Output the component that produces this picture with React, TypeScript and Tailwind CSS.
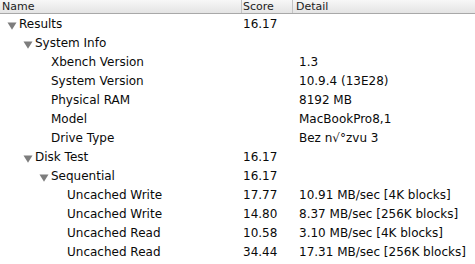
import React from "react";

type Row = { level: number; label: string; score?: string; detail?: string; open?: boolean };

const rows: Row[] = [
  { level: 0, label: "Results", score: "16.17", open: true },
  { level: 1, label: "System Info", open: true },
  { level: 2, label: "Xbench Version", detail: "1.3" },
  { level: 2, label: "System Version", detail: "10.9.4 (13E28)" },
  { level: 2, label: "Physical RAM", detail: "8192 MB" },
  { level: 2, label: "Model", detail: "MacBookPro8,1" },
  { level: 2, label: "Drive Type", detail: "Bez n\u221A\u00B0zvu 3" },
  { level: 1, label: "Disk Test", score: "16.17", open: true },
  { level: 2, label: "Sequential", score: "16.17", open: true },
  { level: 3, label: "Uncached Write", score: "17.77", detail: "10.91 MB/sec [4K blocks]" },
  { level: 3, label: "Uncached Write", score: "14.80", detail: "8.37 MB/sec [256K blocks]" },
  { level: 3, label: "Uncached Read", score: "10.58", detail: "3.10 MB/sec [4K blocks]" },
  { level: 3, label: "Uncached Read", score: "34.44", detail: "17.31 MB/sec [256K blocks]" },
];

const indent = ["pl-[19px]", "pl-[35px]", "pl-[51px]", "pl-[67px]"];

function Disclosure() {
  return (
    <svg width="10" height="8" viewBox="0 0 10 8" className="absolute left-[-12px] top-[5px]">
      <path d="M0.5 0.5 H9.5 L5 7.8 Z" fill="#7d7d7d" />
    </svg>
  );
}

export default function App() {
  return (
    <div
      className="w-[475px] h-[264px] bg-white overflow-hidden text-[#0a0a0a]"
      style={{ fontFamily: '"DejaVu Sans", "Liberation Sans", sans-serif' }}
    >
      <div className="flex h-[14px] text-[11px] leading-[13px] text-[#222] bg-gradient-to-b from-[#f7f7f7] to-[#e4e4e4] border-b border-[#a8a8a8]">
        <div className="w-[242px] pl-[2px] border-r border-[#c4c4c4]">Name</div>
        <div className="w-[51px] pl-[1px] border-r border-[#c4c4c4]">Score</div>
        <div className="flex-1 pl-[3px]">Detail</div>
      </div>
      {rows.map((r, i) => (
        <div key={i} className="flex h-[19px] pt-[2px] text-[12px] leading-[17px]">
          <div className={`w-[242px] ${indent[r.level]}`}>
            <span className="relative">
              {r.open && <Disclosure />}
              {r.label}
            </span>
          </div>
          <div className="w-[51px] pl-[1px]">{r.score ?? ""}</div>
          <div className="flex-1 pl-[6px]">{r.detail ?? ""}</div>
        </div>
      ))}
    </div>
  );
}
